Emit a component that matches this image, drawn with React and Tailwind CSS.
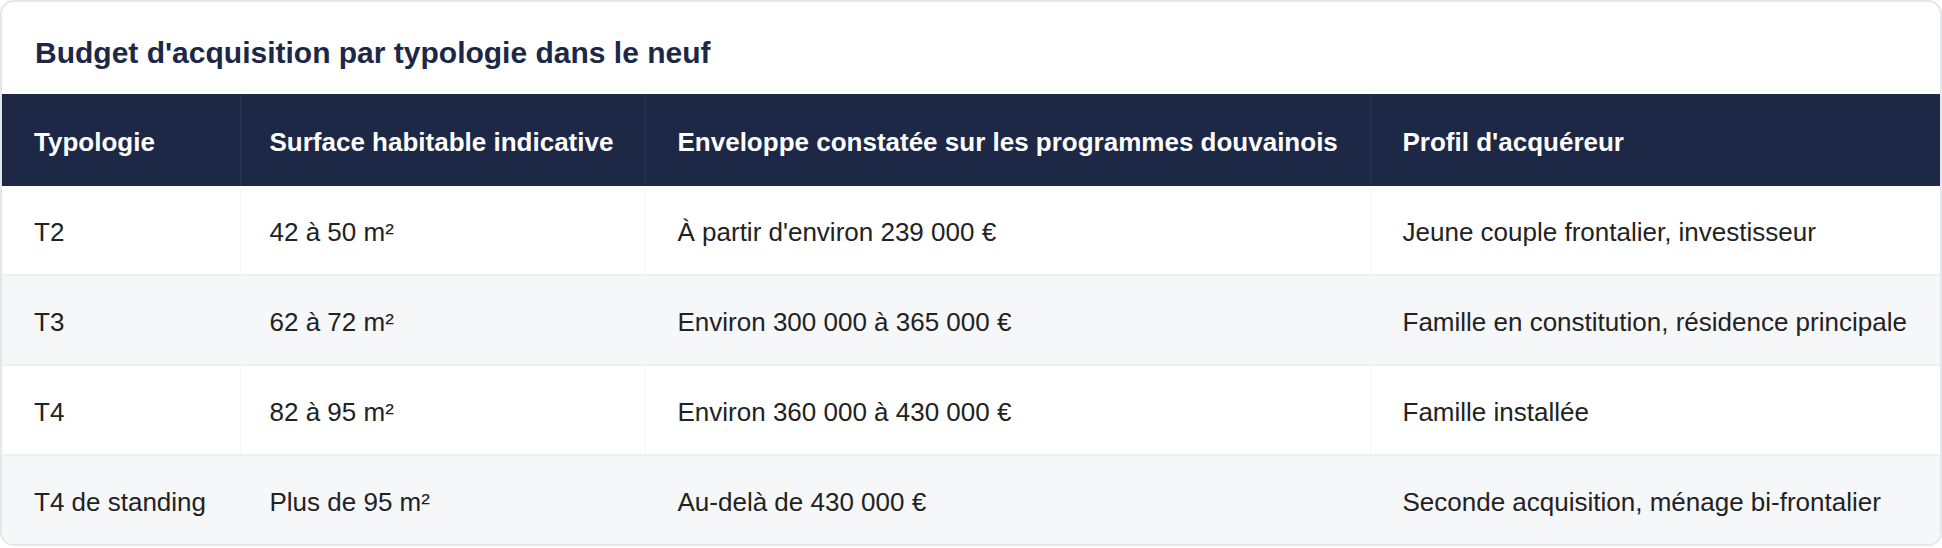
import React from 'react';

const rows = [
  { type: 'T2', surface: '42 à 50 m²', budget: "À partir d'environ 239 000 €", profile: 'Jeune couple frontalier, investisseur' },
  { type: 'T3', surface: '62 à 72 m²', budget: 'Environ 300 000 à 365 000 €', profile: 'Famille en constitution, résidence principale' },
  { type: 'T4', surface: '82 à 95 m²', budget: 'Environ 360 000 à 430 000 €', profile: 'Famille installée' },
  { type: 'T4 de standing', surface: 'Plus de 95 m²', budget: 'Au-delà de 430 000 €', profile: 'Seconde acquisition, ménage bi-frontalier' },
];

const headers = [
  'Typologie',
  'Surface habitable indicative',
  'Enveloppe constatée sur les programmes douvainois',
  "Profil d'acquéreur",
];

// left padding per column, the second column sits a touch closer to its border
const padLeft = ['pl-[32px]', 'pl-[29px]', 'pl-[32px]', 'pl-[32px]'];

const App = () => {
  return (
    <div className="bg-white font-['Liberation_Sans',Arial,sans-serif]">
      <div className="border-2 border-[#e4e7eb] rounded-[14px] overflow-hidden bg-white">
        {/* Title */}
        <h2 className="pt-[32px] pb-[23px] px-[33px] text-[30px] leading-[37px] font-bold text-[#1c2846]">
          Budget d'acquisition par typologie dans le neuf
        </h2>

        {/* Table */}
        <table className="w-full table-fixed border-collapse">
          <colgroup>
            <col className="w-[238px]" />
            <col className="w-[405px]" />
            <col className="w-[725px]" />
            <col />
          </colgroup>
          <thead>
            <tr className="bg-[#1c2846]">
              {headers.map((h, i) => (
                <th
                  key={h}
                  className={`text-left text-white font-bold text-[26px] leading-[32px] pt-[32px] pb-[28px] pr-[32px] ${padLeft[i]} whitespace-nowrap ${
                    i < headers.length - 1 ? 'border-r border-[#2b3752]' : ''
                  }`}
                >
                  {h}
                </th>
              ))}
            </tr>
          </thead>
          <tbody>
            {rows.map((row, idx) => {
              const cells = [row.type, row.surface, row.budget, row.profile];
              const isLast = idx === rows.length - 1;
              return (
                <tr
                  key={row.type}
                  className={`${idx % 2 === 1 ? 'bg-[#f6f7f9]' : 'bg-white'} ${
                    isLast ? '' : 'border-b-2 border-[#eef0f3]'
                  }`}
                >
                  {cells.map((c, i) => (
                    <td
                      key={i}
                      className={`text-[26px] leading-[32px] text-[#222222] pt-[30px] pb-[26px] pr-[32px] ${padLeft[i]} whitespace-nowrap ${
                        i < cells.length - 1 ? 'border-r border-[#f5f6f8]' : ''
                      }`}
                    >
                      {c}
                    </td>
                  ))}
                </tr>
              );
            })}
          </tbody>
        </table>
      </div>
    </div>
  );
};

export default App;
